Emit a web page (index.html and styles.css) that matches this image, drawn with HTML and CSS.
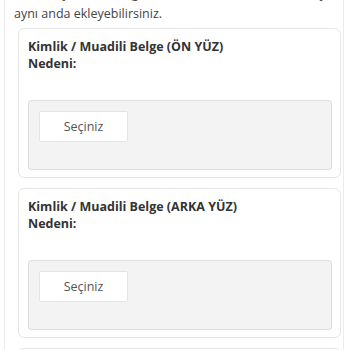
FILE: index.html
```html
<!DOCTYPE html>
<html lang="tr">
<head>
<meta charset="utf-8">
<link rel="stylesheet" href="styles.css">
</head>
<body>
<div class="panel">
  <p class="intro">sisteme yüklemeniz gerekmektedir. Bir den fazla dosya<br>aynı anda ekleyebilirsiniz.</p>
  <div class="card">
    <div class="title">Kimlik / Muadili Belge (ÖN YÜZ)<br>Nedeni:</div>
    <div class="drop"><button class="pick">Seçiniz</button></div>
  </div>
  <div class="card">
    <div class="title">Kimlik / Muadili Belge (ARKA YÜZ)<br>Nedeni:</div>
    <div class="drop"><button class="pick">Seçiniz</button></div>
  </div>
  <div class="card">
    <div class="title">Kimlik / Muadili Belge<br>Nedeni:</div>
    <div class="drop"><button class="pick">Seçiniz</button></div>
  </div>
</div>
</body>
</html>
```
FILE: styles.css
```css
html, body {
  margin: 0;
  padding: 0;
  background: #fff;
  font-family: "Open Sans", "Liberation Sans", sans-serif;
  color: #333;
  overflow: hidden;
}
.panel {
  margin: -20px 6px 0 4px;
  border: 1px solid #ececec;
  border-top: none;
  padding: 4px 2px 0 9px;
}
.intro {
  margin: 0 0 4px 0;
  font-size: 12.5px;
  line-height: 20px;
  color: #444;
  white-space: nowrap;
}
.card {
  margin: 0 0 10px 4px;
  border: 1px solid #e6e6e6;
  border-radius: 6px;
  padding: 9px 8px 7px 9px;
}
.title {
  font-weight: 700;
  font-size: 12.5px;
  line-height: 17px;
  color: #333;
}
.drop {
  margin-top: 28px;
  background: #f3f3f3;
  border: 1px solid #dedede;
  border-radius: 3px;
  padding: 10px;
  box-sizing: border-box;
  height: 70px;
}
.pick {
  display: block;
  width: 89px;
  height: 31px;
  background: #fff;
  border: 1px solid #e4e4e4;
  border-radius: 2px;
  font-family: "Open Sans", "Liberation Sans", sans-serif;
  font-size: 12.5px;
  color: #555;
  padding: 0;
}
```
